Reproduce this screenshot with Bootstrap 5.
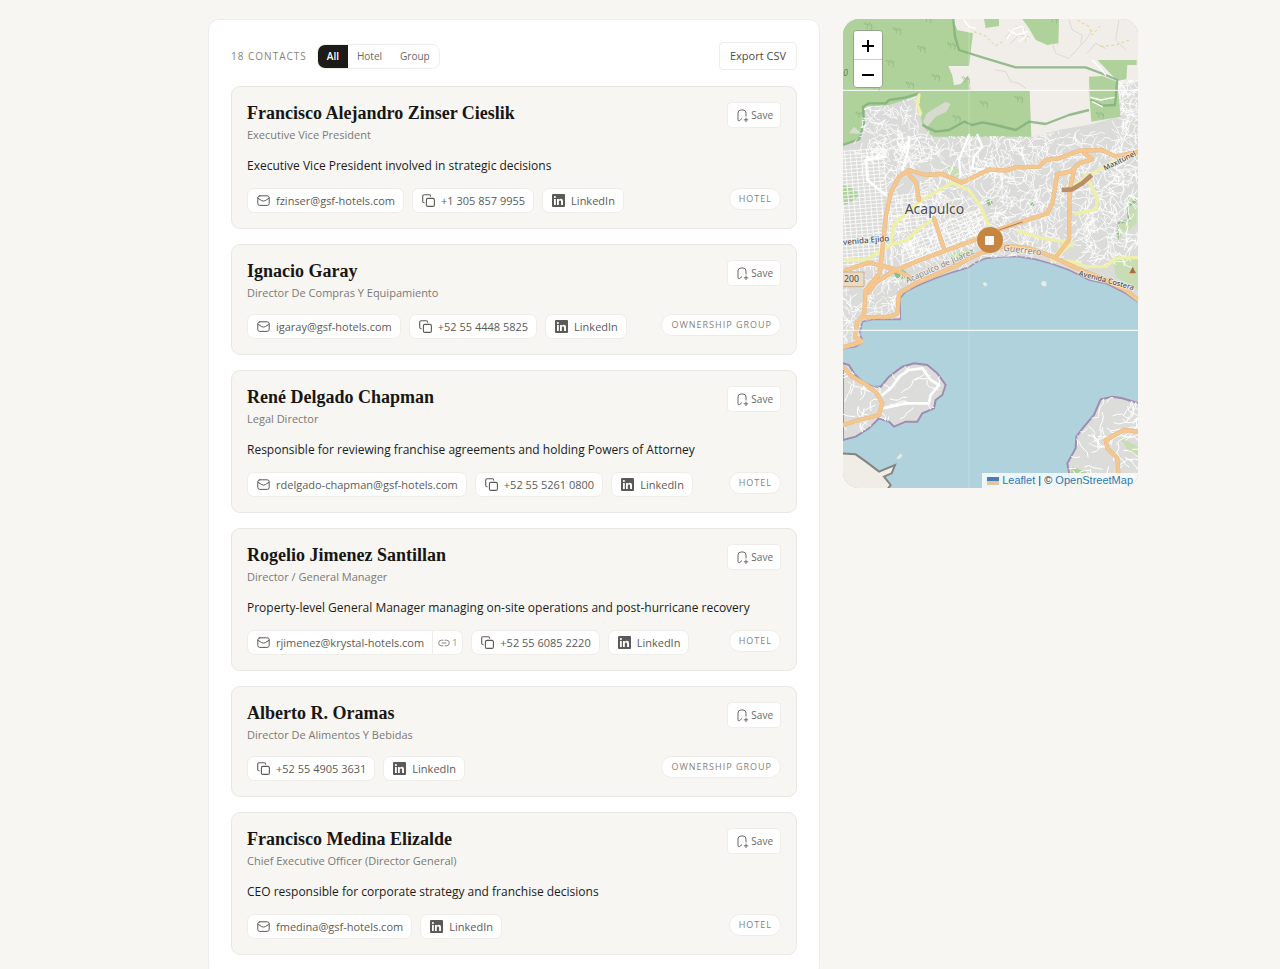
<!DOCTYPE html>
<html lang="en">
<head>
<meta charset="utf-8">
<meta name="viewport" content="width=device-width, initial-scale=1">
<title>Hotel contacts</title>
<link href="https://cdn.jsdelivr.net/npm/bootstrap@5.3.0/dist/css/bootstrap.min.css" rel="stylesheet">
<style>
  body { background: #f7f6f3; color: #1c1b19; font-family: "Open Sans", "Noto Sans", sans-serif; font-size: 11px; line-height: 18px; }
  a { text-decoration: none; }
  .page { display: grid; grid-template-columns: minmax(0, 1fr); gap: 23px; padding: 19px 16px; align-items: start; }
  @media (min-width: 992px) {
    .page { grid-template-columns: minmax(0, 612fr) minmax(0, 295fr); padding: 19px 142px 19px 208px; }
  }
  .panel { background: #fff; border: 1px solid #eeede9; border-radius: 11px; padding: 22px; }
  .count { color: #85837e; font-size: 10px; letter-spacing: 1px; }
  .filter { border: 1px solid #eeede9; border-radius: 8px; overflow: hidden; margin-left: 10px; }
  .filter button { border: 0; background: #fff; color: #6a6864; font-size: 10px; padding: 0 9px; line-height: 23px; font-weight: 500; }
  .filter button.active { background: #1c1b17; color: #fff; font-weight: 600; }
  .export { background: #fff; border: 1px solid #eeede9; border-radius: 4px; color: #4c4a47; padding: 4px 10px; font-weight: 500; }
  .contacts { display: grid; gap: 15px; margin-top: 16px; }
  .contact { background: #f7f6f3; border: 1px solid #e8e7e3; border-radius: 9px; padding: 15px; }
  .person { font: bold 18px/22px "Liberation Serif", serif; margin: 0 0 2px; color: #171614; }
  .role { color: #7b7975; margin: 0; }
  .about { font-size: 12px; line-height: 21px; margin: 11px 0 0; }
  .save { background: #fff; border: 1px solid #eeede9; border-radius: 4px; color: #6a6864; font-size: 10px; line-height: 24px; padding: 0 7px 0 8px; gap: 2px; font-weight: 500; }
  .links { margin-top: 12px; }
  .chip { background: #fff; border: 1px solid #eeede9; border-radius: 7px; color: #5c5a57; padding: 0 8px 0 9px; line-height: 23px; gap: 6px; white-space: nowrap; }
  .chip:hover, .src:hover { color: #1c1b19; }
  .chip.joined { border-radius: 7px 0 0 7px; }
  .src { background: #fff; border: 1px solid #eeede9; border-left-width: 0; border-radius: 0 7px 7px 0; color: #8b8985; font-size: 9px; line-height: 23px; padding: 0 5px; gap: 2px; }
  .kind { background: #fff; border: 1px solid #eeede9; border-radius: 11px; color: #85837e; font-size: 9px; line-height: 20px; letter-spacing: 1px; padding: 0 8px 0 9px; white-space: nowrap; }
  .map { border-radius: 16px; overflow: hidden; aspect-ratio: 295 / 469; background: #b0d2dd; }
  .map > svg { display: block; width: 100%; height: 100%; }
  .zoomer { position: absolute; left: 10px; top: 11px; width: 30px; border: 1px solid #93a58b; border-radius: 4px; overflow: hidden; }
  .zoomer button { border: 0; background: #fff; color: #000; height: 28px; padding: 0; }
  .zoomer button + button { border-top: 1px solid #ccc; }
  .pin { position: absolute; left: 50%; top: 47%; width: 26px; height: 26px; margin: -12px 0 0 -14px; background: #c68642; }
  .credit { position: absolute; right: 0; bottom: 0; background: #ffffffcc; font: 11px/15px "Liberation Sans", sans-serif; padding: 0 5px; color: #333; white-space: nowrap; }
  .credit a { color: #2b78b5; }
</style>
</head>
<body>
<svg class="d-none" xmlns="http://www.w3.org/2000/svg">
  <symbol id="mail" viewBox="0 0 13 13"><g fill="none" stroke="currentColor" stroke-linecap="round" stroke-linejoin="round"><rect x=".8" y="1.8" width="11.400" height="9.600" rx="2"/><path d="M1 4.300l3.700 2.300q1.800 1 3.600 0L12 4.300"/></g></symbol>
  <symbol id="copy" viewBox="0 0 13 13"><g fill="none" stroke="currentColor" stroke-width="1.100" stroke-linecap="round" stroke-linejoin="round"><rect x="4.400" y="4.400" width="8" height="8" rx="1.500"/><path d="M2.200 8.700C1.200 8.700.7 8 .7 7.200V2.200C.7 1.200 1.300.7 2.200.7h5c.9 0 1.500.5 1.500 1.500"/></g></symbol>
  <symbol id="linkedin" viewBox="0 0 13 13"><path fill="currentColor" fill-rule="evenodd" d="M1 0h11a1 1 0 0 1 1 1v11a1 1 0 0 1-1 1H1a1 1 0 0 1-1-1V1a1 1 0 0 1 1-1zM2 5v6h1.800V5zM2.900 2a1.050 1.050 0 1 0 0 2.100a1.050 1.050 0 0 0 0-2.100zM5 5v6h1.800V7.800c0-1.800 2.300-1.900 2.300 0V11H11V7.200C11 4.400 8 4.200 6.800 5.900V5z"/></symbol>
  <symbol id="bookmark" viewBox="0 0 13 13"><path fill="none" stroke="currentColor" stroke-linecap="round" stroke-linejoin="round" d="M5.700 9.800L3.600 11.500Q2 12.300 2 10.800V4Q2 1 5 1h2Q10 1 10 4v3M10 9v3.600M8.200 10.800h3.600"/></symbol>
  <symbol id="chain" viewBox="0 0 12 10"><path fill="none" stroke="currentColor" stroke-linecap="round" d="M5 2.200H3.500a2.800 2.800 0 0 0 0 5.600H5M7 2.200h1.500a2.800 2.800 0 0 1 0 5.600H7M4 5h4"/></symbol>
</svg>

<main class="page">
  <section class="panel">
    <div class="d-flex align-items-center">
      <span class="count">18 CONTACTS</span>
      <div class="filter d-flex" role="group" aria-label="Filter contacts">
        <button type="button" class="active">All</button>
        <button type="button">Hotel</button>
        <button type="button">Group</button>
      </div>
      <button type="button" class="export ms-auto">Export CSV</button>
    </div>
    <div class="contacts" id="contacts"></div>
  </section>

  <aside class="map position-relative">
    <svg viewBox="12 27 885 1407" preserveAspectRatio="xMidYMid slice" role="img" aria-label="Map of Acapulco">
      <defs>
        <clipPath id="town"><path d="M12 405L60 385 75 290 150 285 240 255 250 345 290 378H577L750 345 845 320 835 210H897V877L860 850 800 820 750 810 690 780 640 762 590 748 540 740H490L440 745 390 772 290 805 200 845 183 865 184 928H100L70 935 62 970 72 995 50 1010 12 1018z"/></clipPath>
        <clipPath id="cape"><path id="capeShape" d="M12 1060L30 1065 45 1090 70 1115 100 1130 125 1130 150 1100 190 1070 225 1060 265 1065 295 1090 320 1125 310 1155 290 1170 285 1195 250 1210 235 1235 200 1235 165 1250 150 1235 120 1225 90 1255 50 1280 12 1290z"/></clipPath>
        <clipPath id="point"><path id="pointShape" d="M900 1180L850 1165 820 1160 785 1168 765 1215 735 1250 712 1280 710 1315 685 1360 700 1440H900z"/></clipPath>
      </defs>
      <rect x="12" y="27" width="885" height="1407" fill="#b0d2dd"/>
      <path fill="#dbdbda" stroke="#a394b5" stroke-width="5" d="M0 20H910V885L860 850 800 820 750 810 720 795 690 780 640 762 590 748 540 740H490L440 745 410 758 390 772 340 787 290 805 240 825 200 845 183 865 184 928H100L70 935 62 970 72 995 50 1010 0 1018z"/>
      <use href="#capeShape" fill="#dcdcdb" stroke="#9d8db0" stroke-width="6"/>
      <use href="#pointShape" fill="#dcdcdb" stroke="#9d8db0" stroke-width="6"/>
      <path fill="#f1eee9" d="M340 20H900V215L845 225 838 320 760 342 670 358 577 380 400 250z"/>
      <path fill="#afd29c" d="M12 27H340L355 60 402 70 390 168 328 168 340 195 345 225 365 222 388 195 390 240H572L577 380H280L250 345 235 258 150 285 80 290 72 340 60 385 12 405zM435 27H480V48L440 54zM550 27H660L658 100 625 105 590 90 570 55zM775 150H893V165L865 165 862 208 835 212zM750 200L790 198 835 215 845 320 757 335 752 270zM12 525Q50 530 60 555 45 580 12 585zM700 1370L740 1385 730 1434H685z"/>
      <path fill="#f1eee9" d="M328 168H390L388 195 365 222 345 225 340 195z"/>
      <path fill="#c8ddb4" d="M840 1280L897 1310V1340L870 1325zM865 565L893 555 893 640 835 690 840 635 870 625zM330 465L350 470 370 495 345 505 325 490zM330 730L400 715 390 745 340 755zM820 735L897 750V840L830 800z"/>
      <path fill="#d8dbcf" d="M270 305L320 275 335 282 322 305 290 320 265 350 252 335 262 312zM30 370L45 350 70 372z"/>
      <path fill="#8cbc86" d="M440 570l14-6 8 16-14 8zM575 575l12 2-2 12-10-4zM160 780l20 -6 22 12 -6 20 -24 -2z"/>
      <g fill="none" stroke="#7fae79" stroke-width="7" stroke-linejoin="round" opacity=".8">
        <path d="M343 27L348 80 360 120 430 142 530 172H740L800 195 835 210 828 285 790 287 755 270M60 390L75 340 72 290 90 280 140 280 150 270 200 262 240 250M250 345L290 365 330 360 375 335 400 345 430 337 470 345 530 360 570 335 620 342 690 315 750 300M12 405L60 388M893 570L865 590 870 630 838 640 835 690"/>
      </g>
      <g fill="none" stroke="#fff" stroke-linecap="round" stroke-linejoin="round">
        <path clip-path="url(#town)" stroke-width="3" opacity=".8" id="townStreets"/>
        <path clip-path="url(#cape)" stroke-width="3" id="capeStreets"/>
        <path clip-path="url(#point)" stroke-width="3" id="pointStreets"/>
        <path stroke-width="7" d="M210 380L205 430 190 480M80 450L85 510 140 555M365 500L360 450 380 400 390 375M440 480L400 475 405 440 430 410 415 375M80 450L140 440"/>
        <path stroke-width="8" d="M130 1155L160 1130 180 1100 210 1080 250 1075 275 1110 300 1125 275 1155 270 1180 200 1180 130 1195"/>
        <path stroke-width="3" stroke="#dcd9d6" d="M470 180L500 185 515 215 540 220 560 235M640 100L650 130 690 145 740 90 760 60M840 30L830 90 860 120M500 80L530 50 555 55 560 95M515 100L540 75 570 80M690 30L700 60 730 75 725 100M745 130L770 100 800 115"/>
        <path stroke-width="4" d="M505 85L525 55 550 50 560 80 540 95M510 60L535 75 565 65M375 30L390 50 410 55M755 262L785 270 825 262M760 275L790 290M760 150L780 170 800 195M840 215L860 240 850 260"/>
      </g>
      <path fill="none" stroke="#e3cf8f" stroke-width="3" stroke-dasharray="8 8" d="M405 65L440 78 470 108 490 95M715 30L750 50 760 75 790 40M785 110L830 105 870 90"/>
      <g fill="none" stroke-linejoin="round" stroke-linecap="round">
        <path stroke="#eff0a8" stroke-width="10" d="M155 700L165 645 195 615 240 575 340 518 390 540 425 590 450 650M20 750H80L115 728 160 703 205 690 240 655 280 630M897 430L850 440 760 490 690 535M740 495L775 565 772 598 710 612M540 665L570 672 610 685 680 695 640 750 700 755 740 770 800 770 830 745 897 742M240 255L235 285 245 310M700 700L650 740"/>
        <path id="mainPath" stroke="#e9b87f" stroke-width="13" d="M897 425L830 440 790 420 720 422 660 445 620 450 600 470 530 472 500 482 450 478 370 518 310 492 260 495 210 480 180 500 155 550 140 620 130 720 122 790 80 840 75 915 55 935 48 980 70 995 12 1012M900 872L860 840 780 800 720 778 650 745 610 728 560 712 500 708 450 720 400 740 350 768 230 820 180 850 175 912 150 920 75 922M90 848L110 818 160 785 230 755 330 718 400 692 470 662 550 635 625 610 640 580 655 492 695 485 720 460 760 448 735 430M705 480L692 540 690 690 655 735M205 490L230 515 240 570M285 625L315 715M20 780L90 758 160 775 210 800M12 1070L40 1100 75 1120 110 1145 130 1180 120 1215 60 1230 12 1245M897 1265L855 1260 800 1290 805 1315 835 1345 838 1390"/>
        <path stroke="#f5c790" stroke-width="10" d="M897 425L830 440 790 420 720 422 660 445 620 450 600 470 530 472 500 482 450 478 370 518 310 492 260 495 210 480 180 500 155 550 140 620 130 720 122 790 80 840 75 915 55 935 48 980 70 995 12 1012M900 872L860 840 780 800 720 778 650 745 610 728 560 712 500 708 450 720 400 740 350 768 230 820 180 850 175 912 150 920 75 922M90 848L110 818 160 785 230 755 330 718 400 692 470 662 550 635 625 610 640 580 655 492 695 485 720 460 760 448 735 430M705 480L692 540 690 690 655 735M205 490L230 515 240 570M285 625L315 715M20 780L90 758 160 775 210 800M12 1070L40 1100 75 1120 110 1145 130 1180 120 1215 60 1230 12 1245M897 1265L855 1260 800 1290 805 1315 835 1345 838 1390"/>
        <path stroke="#b98e69" stroke-width="14" stroke-linecap="butt" d="M668 540L700 538 730 520 758 495"/>
        <path stroke="#ad7459" stroke-width="3" d="M480 660L550 636"/>
      </g>
      <path fill="#f0ede7" stroke="#85857f" stroke-width="6" d="M0 1330L50 1333 85 1358 120 1385 168 1365 158 1390 135 1400 155 1425 140 1445H0z"/>
      <path fill="#ebeae3" d="M430 820l8-4 8 8-8 6zM606 820q6-12 16-4v12q-14 4-16-8zM172 1345l14-15 4 8-10 10z"/>
      <path fill="#b6683b" d="M871 790L881 770 891 790z"/>
      <path stroke="#fff" stroke-width="3" d="M12 241H897M12 961H897"/>
      <path stroke="#fff" stroke-width="2" opacity=".35" d="M390 27V1434"/>
      <g fill="none" stroke="#7ba873" stroke-width="2" opacity=".7" id="trees"></g>
      <path fill="#eadbc5" stroke="#c9b08e" stroke-width="3" d="M4 786H75V830H4z"/>
      <g font-family="Noto Sans, sans-serif" fill="#4d4d4d" stroke="#fff" stroke-opacity=".5" stroke-width="5" paint-order="stroke">
        <text x="197" y="611" font-size="42">Acapulco</text>
        <text font-size="24" font-weight="500" transform="translate(13 705) rotate(-5)">venida Ejido</text>
        <text font-size="22" font-weight="500" transform="translate(798 482) rotate(-26)">Maxitúnel</text>
        <text font-size="22" font-weight="500" transform="translate(718 796) rotate(15)">Avenida Costera</text>
        <text font-size="25" fill="#8f8577" transform="translate(205 820) rotate(-24)">Acapulco de Juárez</text>
        <text font-size="27" fill="#8f8577" transform="translate(492 722) rotate(7)">Guerrero</text>
        <text x="15" y="817" font-size="26" stroke="none">200</text>
        <text x="13" y="199" font-size="25" font-style="italic" fill="#58805a" stroke="none">0</text>
      </g>
    </svg>
    <div class="zoomer d-flex flex-column">
      <button type="button" aria-label="Zoom in"><svg width="12" height="12" aria-hidden="true"><path d="M6 0v12M0 6h12" stroke="#000" stroke-width="2"/></svg></button>
      <button type="button" aria-label="Zoom out"><svg width="12" height="12" aria-hidden="true"><path d="M0 6h12" stroke="#000" stroke-width="2"/></svg></button>
    </div>
    <div class="pin rounded-circle d-flex align-items-center justify-content-center"><svg width="9" height="9" aria-hidden="true"><rect width="9" height="9" rx="1" fill="#faf8f4"/></svg></div>
    <div class="credit"><svg width="12" height="8" aria-hidden="true"><path fill="#4c7bb5" d="M0 0h12v4H0z"/><path fill="#e0c79b" d="M0 4h12v4H0z"/></svg> <a href="#leaflet">Leaflet</a> | © <a href="#osm">OpenStreetMap</a></div>
  </aside>
</main>

<script>
  const people = [
    { name: 'Francisco Alejandro Zinser Cieslik', role: 'Executive Vice President', about: 'Executive Vice President involved in strategic decisions', mail: 'fzinser@gsf-hotels.com', tel: '+1 305 857 9955', kind: 'HOTEL' },
    { name: 'Ignacio Garay', role: 'Director De Compras Y Equipamiento', mail: 'igaray@gsf-hotels.com', tel: '+52 55 4448 5825', kind: 'OWNERSHIP GROUP' },
    { name: 'René Delgado Chapman', role: 'Legal Director', about: 'Responsible for reviewing franchise agreements and holding Powers of Attorney', mail: 'rdelgado-chapman@gsf-hotels.com', tel: '+52 55 5261 0800', kind: 'HOTEL' },
    { name: 'Rogelio Jimenez Santillan', role: 'Director / General Manager', about: 'Property-level General Manager managing on-site operations and post-hurricane recovery', mail: 'rjimenez@krystal-hotels.com', sources: 1, tel: '+52 55 6085 2220', kind: 'HOTEL' },
    { name: 'Alberto R. Oramas', role: 'Director De Alimentos Y Bebidas', tel: '+52 55 4905 3631', kind: 'OWNERSHIP GROUP' },
    { name: 'Francisco Medina Elizalde', role: 'Chief Executive Officer (Director General)', about: 'CEO responsible for corporate strategy and franchise decisions', mail: 'fmedina@gsf-hotels.com', kind: 'HOTEL' }
  ];
  const icon = (id, w = 13, h = 13) => `<svg class="flex-shrink-0" width="${w}" height="${h}" aria-hidden="true"><use href="#${id}"/></svg>`;
  const chip = (id, text, href, extra = '') => `<a class="chip d-flex align-items-center ${extra}" href="${href}">${icon(id)}${text}</a>`;
  document.getElementById('contacts').innerHTML = people.map(p => `
    <article class="contact">
      <div class="d-flex justify-content-between align-items-start">
        <div><h2 class="person">${p.name}</h2><p class="role">${p.role}</p></div>
        <button type="button" class="save d-flex align-items-center">${icon('bookmark')}Save</button>
      </div>
      ${p.about ? `<p class="about">${p.about}</p>` : ''}
      <div class="links d-flex align-items-start justify-content-between gap-2">
        <div class="d-flex flex-wrap gap-2">
          ${p.mail ? `<div class="d-flex">${chip('mail', p.mail, 'mailto:' + p.mail, p.sources ? 'joined' : '')}${p.sources ? `<a class="src d-flex align-items-center" href="#sources" aria-label="Sources">${icon('chain', 12, 10)}${p.sources}</a>` : ''}</div>` : ''}
          ${p.tel ? chip('copy', p.tel, 'tel:' + p.tel.replace(/ /g, '')) : ''}
          ${chip('linkedin', 'LinkedIn', '#linkedin-profile')}
        </div>
        <span class="kind">${p.kind}</span>
      </div>
    </article>`).join('');

  // Minor streets: short wandering lines from a fixed seed, clipped to each built-up area.
  let seed = 7;
  const rnd = () => (seed = (seed * 16807) % 2147483647) / 2147483647;
  function wander(x0, y0, x1, y1, n, step) {
    let d = '';
    for (let i = 0; i < n; i++) {
      let x = x0 + rnd() * (x1 - x0), y = y0 + rnd() * (y1 - y0), a = rnd() * 6.28;
      d += `M${x | 0} ${y | 0}`;
      for (let k = 0; k < 4; k++) {
        a += (rnd() - 0.5) * 1.6;
        x += Math.cos(a) * step; y += Math.sin(a) * step;
        d += `L${x | 0} ${y | 0}`;
      }
    }
    return d;
  }
  function blocks(x0, y0, w, h, gap, slope) {
    let d = '';
    for (let t = 0; t <= h; t += gap) d += `M${x0} ${y0 + t}l${w} ${-w * slope}`;
    for (let t = 0; t <= w; t += gap * 1.5) d += `M${x0 + t} ${y0 - t * slope}l${h * slope} ${h}`;
    return d;
  }
  document.getElementById('townStreets').setAttribute('d',
    blocks(0, 425, 135, 360, 11, 0.08) + blocks(150, 560, 110, 110, 12, 0.12) + blocks(190, 690, 240, 90, 12, 0.4) +
    wander(70, 270, 240, 480, 150, 9) + wander(150, 370, 900, 760, 900, 11) + wander(830, 210, 900, 400, 60, 10) + wander(12, 780, 200, 1000, 100, 11));
  document.getElementById('capeStreets').setAttribute('d', wander(12, 1060, 320, 1280, 65, 13));
  document.getElementById('pointStreets').setAttribute('d', wander(690, 1160, 897, 1434, 70, 14));
  document.getElementById('trees').innerHTML = [[85, 50], [172, 65], [262, 30], [245, 120], [335, 110], [150, 162], [288, 205], [210, 228], [432, 285], [537, 270], [350, 328], [60, 318], [780, 318], [378, 212], [640, 30], [108, 232]]
    .map(([x, y]) => `<path d="M${x - 10} ${y - 10}q6 -6 10 2q-2 8 -10 -2m10 2q2 8 -1 14M${x + 3} ${y - 8}q6 -6 10 2q-2 8 -10 -2m10 2q2 8 -1 16"/>`).join('');
</script>
<script src="https://cdn.jsdelivr.net/npm/bootstrap@5.3.0/dist/js/bootstrap.bundle.min.js"></script>
</body>
</html>
